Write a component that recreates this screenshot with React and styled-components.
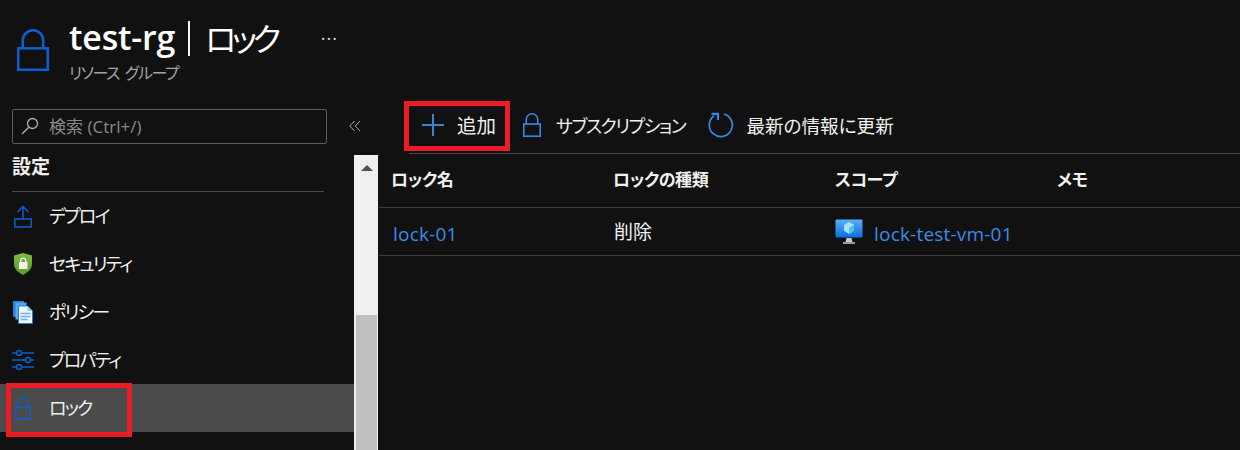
import styled, { createGlobalStyle } from "styled-components";

const GlobalStyle = createGlobalStyle`
  html, body {
    margin: 0;
    height: 450px;
    overflow: hidden;
    background: #111111;
    font-family: "Open Sans", "Noto Sans CJK JP", sans-serif;
    font-feature-settings: "palt";
  }
  * { box-sizing: border-box; }
`;

const Page = styled.div`
  width: 1240px;
  height: 450px;
  overflow: hidden;
  display: flex;
  flex-direction: column;
  color: #f0f0f0;
`;

const Header = styled.header`
  height: 100px;
  flex: none;
  display: flex;
  padding: 29px 0 0 17px;
`;

const HeaderIcon = styled.div`
  height: 43px;
`;

const TitleBlock = styled.div`
  margin: -11px 0 0 20px;
`;

const TitleRow = styled.div`
  display: flex;
  align-items: center;
  height: 38px;
  color: #fff;
`;

const ResourceName = styled.span`
  font-size: 34px;
  font-weight: 600;
  letter-spacing: -0.2px;
`;

const Pipe = styled.span`
  width: 2px;
  height: 35px;
  margin: 2px 15px 0 13px;
  background: #f4f4f4;
`;

const PageName = styled.span`
  font-size: 32px;
  letter-spacing: -4.5px;
`;

const More = styled.span`
  margin-left: 44px;
  font-size: 18px;
  letter-spacing: 1px;
  color: #ddd;
  transform: translateY(1px);
`;

const Subtitle = styled.div`
  margin-top: 4px;
  font-size: 16px;
  letter-spacing: -1.4px;
  word-spacing: 3px;
  color: #a3a3a3;
`;

const Body = styled.div`
  flex: 1;
  min-height: 0;
  display: flex;
`;

const Sidebar = styled.aside`
  width: 379px;
  flex: none;
  display: flex;
  flex-direction: column;
  border-right: 1px solid #111;
`;

const SearchRow = styled.div`
  height: 55px;
  flex: none;
  display: flex;
  align-items: flex-start;
  padding: 9px 0 0 12px;
`;

const SearchBox = styled.div`
  width: 315px;
  height: 35px;
  display: flex;
  align-items: center;
  gap: 10px;
  padding: 0 0 2px 8px;
  border: 1px solid #5c5c5c;
  border-radius: 2px;
  font-size: 17px;
  color: #8a8a8a;
`;

const Collapse = styled.span`
  margin: 11px 0 0 22px;
  display: flex;
`;

const SideBody = styled.div`
  flex: 1;
  min-height: 0;
  display: flex;
`;

const Nav = styled.nav`
  width: 354px;
  flex: none;
`;

const SectionTitle = styled.div`
  height: 37px;
  margin: 0 30px 0 12px;
  border-bottom: 1px solid #484848;
  font-size: 19px;
  line-height: 25px;
  font-weight: 700;
  color: #f0f0f0;
`;

const NavItem = styled.div`
  position: relative;
  height: 48px;
  display: flex;
  align-items: center;
  padding: 0 0 2px 49px;
  font-size: 18px;
  letter-spacing: -1.8px;
  background: ${(p) => (p.$active ? "#4b4b4b" : "transparent")};
`;

const NavIcon = styled.span`
  position: absolute;
  left: 12px;
  top: 0;
  width: 22px;
  height: 100%;
  display: flex;
  align-items: center;
  justify-content: center;
`;

const Highlight = styled.span`
  position: absolute;
  border: 5px solid #ed1c24;
  pointer-events: none;
`;

const LockHighlight = styled(Highlight)`
  left: 6px;
  top: -1px;
  width: 126px;
  height: 54px;
`;

const Scrollbar = styled.div`
  width: 24px;
  flex: none;
  padding: 0 1px 0 2px;
  display: flex;
  flex-direction: column;
  background: #f0f0f0;
`;

const ArrowUp = styled.div`
  height: 160px;
  flex: none;
  padding-top: 10px;
  display: flex;
  justify-content: center;
  &::before {
    content: "";
    border-left: 6px solid transparent;
    border-right: 6px solid transparent;
    border-bottom: 6px solid #505050;
    height: 0;
  }
`;

const Thumb = styled.div`
  flex: 1;
  background: #c0c0c0;
`;

const Main = styled.main`
  flex: 1;
  min-width: 0;
`;

const Toolbar = styled.div`
  height: 54px;
  margin-left: 30px;
  padding-bottom: 4px;
  display: flex;
  align-items: center;
  border-bottom: 1px solid #484848;
`;

const ToolButton = styled.div`
  position: relative;
  display: flex;
  align-items: center;
  gap: ${(p) => p.$gap}px;
  margin-left: ${(p) => p.$offset}px;
  color: #f0f0f0;
`;

const ToolLabel = styled.span`
  font-size: ${(p) => p.$size}px;
  letter-spacing: ${(p) => p.$spacing || 0}px;
`;

const AddHighlight = styled(Highlight)`
  left: -18px;
  top: -9px;
  width: 106px;
  height: 50px;
`;

const Row = styled.div`
  height: ${(p) => p.$height}px;
  display: grid;
  grid-template-columns: repeat(4, 222px);
  align-items: center;
  padding: 0 0 ${(p) => p.$lift}px 12px;
  border-bottom: 1px solid #3c3c3c;
  font-size: 19px;
`;

const HeadCell = styled.div`
  font-weight: 700;
  font-size: 17px;
  letter-spacing: -0.4px;
  color: #f0f0f0;
`;

const TypeCell = styled.div`
  margin: 0 0 2px 1px;
`;

const LinkText = styled.span`
  color: #3f8ae6;
  font-size: 19px;
  letter-spacing: 0.2px;
  transform: translateY(2px);
`;

const RowLink = styled(LinkText)`
  margin-left: 2px;
`;

const ScopeCell = styled.div`
  display: flex;
  align-items: center;
  gap: 11px;
`;

const LockIcon = ({ width, height, color, stroke }) => (
  <svg width={width} height={height} viewBox={`0 0 ${width} ${height}`} fill="none" stroke={color} strokeWidth={stroke}>
    <rect x={stroke / 2} y={height * 0.46} width={width - stroke} height={height * 0.54 - stroke / 2} />
    <path
      d={`M${width * 0.18} ${height * 0.46}V${width * 0.32 + stroke / 2}a${width * 0.32} ${width * 0.32} 0 0 1 ${width * 0.64} 0V${height * 0.46}`}
    />
  </svg>
);

const SearchIcon = () => (
  <svg width="18" height="18" viewBox="0 0 18 18" fill="none" stroke="#b0b0b0" strokeWidth="1.3">
    <circle cx="11.5" cy="6.5" r="5" />
    <path d="M7.8 10.200L1 17" />
  </svg>
);

const ChevronsIcon = () => (
  <svg width="12" height="12" viewBox="0 0 12 12" fill="none" stroke="#a8a8a8" strokeWidth="1">
    <path d="M5.500 1L.8 6l4.700 5M11 1L6.300 6l4.700 5" />
  </svg>
);

const DeployIcon = () => (
  <svg width="18" height="23" viewBox="0 0 18 23" fill="none" stroke="#0a5fd1" strokeWidth="1.500">
    <path d="M.8 14h16.400v8H.8zM9 14V1.500M3.500 7L9 1.500 14.500 7" />
  </svg>
);

const ShieldIcon = () => (
  <svg width="18" height="22" viewBox="0 0 18 22">
    <defs>
      <linearGradient id="shieldFill" x1="0" y1="0" x2="0" y2="1">
        <stop offset="0" stopColor="#7dba42" />
        <stop offset="1" stopColor="#5a9e28" />
      </linearGradient>
    </defs>
    <path d="M9 0l9 2.500v8.500c0 5-4.500 8.800-9 11-4.500-2.200-9-6-9-11V2.500z" fill="url(#shieldFill)" />
    <rect x="5" y="9" width="8.500" height="7" fill="#f2f2f2" />
    <path d="M6.800 9V7.500a2.450 2.450 0 0 1 4.900 0V9" fill="none" stroke="#f2f2f2" strokeWidth="1.300" />
  </svg>
);

const PolicyIcon = () => (
  <svg width="20" height="23" viewBox="0 0 20 23">
    <path d="M0 0h11v16H0z" fill="#2a80dc" />
    <path d="M2.500 1.500h11v17h-11z" fill="#5aa6ec" />
    <path d="M5.500 5h9l5 5v12.500h-14z" fill="#eef6fd" stroke="#1f7fe0" strokeWidth="1" />
    <path d="M14.500 5v5h5z" fill="#8cc6f5" />
    <path d="M7.500 12.500h10M7.500 15.500h10M7.500 18.500h7" stroke="#74aee6" strokeWidth="1.300" />
  </svg>
);

const SlidersIcon = () => (
  <svg width="22" height="20" viewBox="0 0 22 20" fill="none" stroke="#0a5fd1" strokeWidth="1.500">
    <path d="M0 3h4.500M9.500 3H22M0 10h13.500M18.500 10H22M0 17h4.500M9.500 17H22" />
    <circle cx="7" cy="3" r="2.500" />
    <circle cx="16" cy="10" r="2.500" />
    <circle cx="7" cy="17" r="2.500" />
  </svg>
);

const PlusIcon = () => (
  <svg width="22" height="22" viewBox="0 0 22 22" stroke="#3f80d4" strokeWidth="2">
    <path d="M11 0v22M0 11h22" />
  </svg>
);

const RefreshIcon = () => (
  <svg width="26" height="26" viewBox="0 0 26 26" fill="none" stroke="#3a86e8" strokeWidth="1.700">
    <path d="M16 2A11.500 11.500 0 1 1 6 3.800" />
    <path d="M3.500 1.800H10V8" strokeWidth="2.200" />
  </svg>
);

const VmIcon = () => (
  <svg width="28" height="26" viewBox="0 0 28 26">
    <defs>
      <linearGradient id="vmScreen" x1="0" y1="0" x2="0" y2="1">
        <stop offset="0" stopColor="#5ab0f5" />
        <stop offset="1" stopColor="#0a6fe0" />
      </linearGradient>
    </defs>
    <rect x="0.500" y="0.500" width="27" height="18" rx="1" fill="url(#vmScreen)" />
    <path d="M14 3l5 2.800v6L14 15l-5-3.200v-6z" fill="#a9e2f5" />
    <path d="M14 9l5-3.200v6L14 15z" fill="#58bfe8" />
    <path d="M11.500 19h5l1 4h-7z" fill="#c8c8c8" />
    <rect x="8" y="23" width="12" height="2" fill="#9a9a9a" />
  </svg>
);

const items = [
  { label: "デプロイ", icon: <DeployIcon /> },
  { label: "セキュリティ", icon: <ShieldIcon /> },
  { label: "ポリシー", icon: <PolicyIcon /> },
  { label: "プロパティ", icon: <SlidersIcon /> },
  { label: "ロック", icon: <LockIcon width={16} height={23} color="#0a5fd1" stroke={1.5} />, active: true },
];

export default function App() {
  return (
    <Page>
      <GlobalStyle />
      <Header>
        <HeaderIcon>
          <LockIcon width={32} height={42} color="#0a5fd1" stroke={2.5} />
        </HeaderIcon>
        <TitleBlock>
          <TitleRow>
            <ResourceName>test-rg</ResourceName>
            <Pipe />
            <PageName>ロック</PageName>
            <More>···</More>
          </TitleRow>
          <Subtitle>リソース グループ</Subtitle>
        </TitleBlock>
      </Header>
      <Body>
        <Sidebar>
          <SearchRow>
            <SearchBox>
              <SearchIcon />
              検索 (Ctrl+/)
            </SearchBox>
            <Collapse>
              <ChevronsIcon />
            </Collapse>
          </SearchRow>
          <SideBody>
            <Nav>
              <SectionTitle>設定</SectionTitle>
              {items.map((item) => (
                <NavItem key={item.label} $active={item.active}>
                  <NavIcon>{item.icon}</NavIcon>
                  {item.label}
                  {item.active && <LockHighlight />}
                </NavItem>
              ))}
            </Nav>
            <Scrollbar>
              <ArrowUp />
              <Thumb />
            </Scrollbar>
          </SideBody>
        </Sidebar>
        <Main>
          <Toolbar>
            <ToolButton $gap={13} $offset={13}>
              <PlusIcon />
              <ToolLabel $size={19.5}>追加</ToolLabel>
              <AddHighlight />
            </ToolButton>
            <ToolButton $gap={15} $offset={27}>
              <LockIcon width={18} height={24} color="#3a86e8" stroke={1.6} />
              <ToolLabel $size={18} $spacing={-1.45}>サブスクリプション</ToolLabel>
            </ToolButton>
            <ToolButton $gap={12} $offset={23}>
              <RefreshIcon />
              <ToolLabel $size={18.6}>最新の情報に更新</ToolLabel>
            </ToolButton>
          </Toolbar>
          <Row $height={54} $lift={5}>
            <HeadCell>ロック名</HeadCell>
            <HeadCell>ロックの種類</HeadCell>
            <HeadCell>スコープ</HeadCell>
            <HeadCell>メモ</HeadCell>
          </Row>
          <Row $height={48} $lift={0}>
            <RowLink>lock-01</RowLink>
            <TypeCell>削除</TypeCell>
            <ScopeCell>
              <VmIcon />
              <LinkText>lock-test-vm-01</LinkText>
            </ScopeCell>
            <div />
          </Row>
        </Main>
      </Body>
    </Page>
  );
}
